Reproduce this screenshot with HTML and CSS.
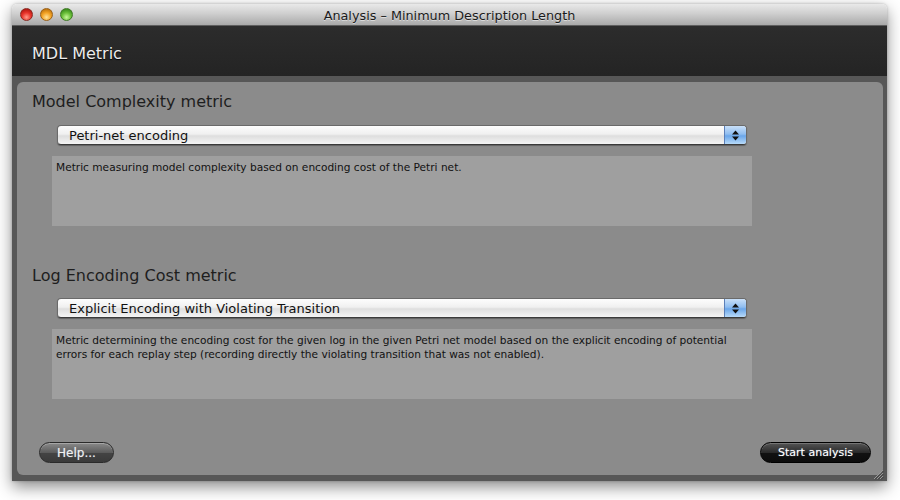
FILE: index.html
```html
<!DOCTYPE html>
<html>
<head>
<meta charset="utf-8">
<link rel="stylesheet" href="styles.css">
</head>
<body>
<div class="window">
  <div class="titlebar">
    <div class="lights">
      <span class="light red"></span>
      <span class="light amber"></span>
      <span class="light green"></span>
    </div>
    <div class="title">Analysis – Minimum Description Length</div>
  </div>
  <div class="header">MDL Metric</div>
  <div class="frame">
    <div class="panel">
      <h2 class="heading">Model Complexity metric</h2>
      <div class="select">
        <span class="select-label">Petri-net encoding</span>
        <span class="select-arrows">
          <svg width="9" height="13" viewBox="0 0 9 13"><path d="M4.5 1.5 L8 5.5 L1 5.5 Z M4.5 11.5 L8 7.5 L1 7.5 Z" fill="#111"/></svg>
        </span>
      </div>
      <div class="desc">Metric measuring model complexity based on encoding cost of the Petri net.</div>

      <h2 class="heading second">Log Encoding Cost metric</h2>
      <div class="select">
        <span class="select-label">Explicit Encoding with Violating Transition</span>
        <span class="select-arrows">
          <svg width="9" height="13" viewBox="0 0 9 13"><path d="M4.5 1.5 L8 5.5 L1 5.5 Z M4.5 11.5 L8 7.5 L1 7.5 Z" fill="#111"/></svg>
        </span>
      </div>
      <div class="desc">Metric determining the encoding cost for the given log in the given Petri net model based on the explicit encoding of potential errors for each replay step (recording directly the violating transition that was not enabled).</div>

      <div class="footer">
        <button class="btn help">Help...</button>
        <button class="btn start">Start analysis</button>
      </div>
    </div>
    <svg class="grip" width="12" height="12" viewBox="0 0 12 12">
      <path d="M11 2 L2 11 M11 5 L5 11 M11 8 L8 11" stroke="#9a9a9a" stroke-width="1"/>
      <path d="M11.5 3 L3 11.5 M11.5 6 L6 11.5 M11.5 9 L9 11.5" stroke="#3a3a3a" stroke-width="0.8"/>
    </svg>
  </div>
</div>
</body>
</html>
```
FILE: styles.css
```css
html, body {
  margin: 0;
  padding: 0;
  background: #ffffff;
}
body {
  width: 900px;
  height: 500px;
  overflow: hidden;
  font-family: "DejaVu Sans", "Noto Sans", sans-serif;
}
.window {
  width: 875px;
  margin: 4px 0 0 12px;
  border-radius: 5px 5px 0 0;
  box-shadow: 0 6px 16px rgba(0,0,0,0.45), 0 0 3px rgba(0,0,0,0.25);
  position: relative;
}
.titlebar {
  height: 22px;
  border-radius: 5px 5px 0 0;
  background: linear-gradient(#e9e9e9, #cfcfcf 45%, #a9a9a9);
  border-bottom: 1px solid #5e5e5e;
  box-sizing: border-box;
  display: flex;
  align-items: center;
  position: relative;
}
.lights {
  display: flex;
  gap: 7px;
  padding-left: 8px;
  position: absolute;
  left: 0;
  top: 4px;
}
.light {
  width: 13px;
  height: 13px;
  border-radius: 50%;
  box-sizing: border-box;
  display: block;
}
.red {
  background: radial-gradient(circle at 50% 75%, #ff9a8a 0, #e9352c 45%, #a8120c 90%);
  border: 1px solid #8a2a22;
}
.amber {
  background: radial-gradient(circle at 50% 75%, #ffe39a 0, #f4a425 45%, #b56a08 90%);
  border: 1px solid #9a6118;
}
.green {
  background: radial-gradient(circle at 50% 75%, #c8f79a 0, #6bc03a 45%, #2f7f16 90%);
  border: 1px solid #3f7a25;
}
.title {
  flex: 1;
  text-align: center;
  font-size: 12.8px;
  color: #1a1a1a;
  text-shadow: 0 1px 0 rgba(255,255,255,0.5);
  padding-top: 1px;
}
.header {
  height: 50px;
  background: linear-gradient(#2c2c2c, #242424);
  color: #ececec;
  font-size: 16px;
  line-height: 50px;
  padding: 3px 0 0 20px;
  box-sizing: border-box;
  text-shadow: 0 1px 1px #000;
}
.frame {
  background: #575757;
  padding: 6px 4px 6px 5px;
  position: relative;
}
.panel {
  background: #8b8b8b;
  border-radius: 6px;
  height: 393px;
  box-sizing: border-box;
  padding: 10px 0 0 15px;
  display: flex;
  flex-direction: column;
  align-items: flex-start;
}
.heading {
  margin: 0;
  font-weight: normal;
  font-size: 16px;
  line-height: 20px;
  color: #1e1e1e;
}
.heading.second {
  margin-top: 40px;
}
.select {
  margin: 13px 0 0 25px;
  width: 690px;
  height: 20px;
  box-sizing: border-box;
  border-radius: 4px;
  border: 1px solid #6a6a6a;
  border-bottom-color: #3a3a3a;
  background: linear-gradient(#fdfdfd, #f0f0f0 45%, #dedede 55%, #f4f4f4);
  display: flex;
  align-items: center;
  overflow: hidden;
  box-shadow: 0 1px 1px rgba(0,0,0,0.3);
}
.heading.second + .select {
  margin-top: 12px;
}
.select-label {
  flex: 1;
  padding-left: 11px;
  font-size: 13px;
  color: #111;
}
.select-arrows {
  width: 21px;
  height: 100%;
  background: linear-gradient(#c9e0f9, #8fbdf0 45%, #6aa6ea 55%, #b7daf9);
  border-left: 1px solid #5b7fb8;
  display: flex;
  align-items: center;
  justify-content: center;
}
.desc {
  margin: 11px 0 0 20px;
  width: 700px;
  height: 70px;
  box-sizing: border-box;
  background: #9f9f9f;
  padding: 4px 4px 0 4px;
  font-size: 10.6px;
  line-height: 14px;
  color: #121212;
}
.footer {
  margin: 43px 0 0 7px;
  width: 832px;
  display: flex;
  justify-content: space-between;
}
.btn {
  height: 21px;
  border-radius: 11px;
  font-family: "DejaVu Sans", sans-serif;
  font-size: 11px;
  padding: 0;
  border: 1px solid #2a2a2a;
  cursor: default;
  text-shadow: 0 0 1px rgba(200,225,255,0.6);
}
.help {
  width: 75px;
  font-size: 12px;
  color: #f0f0f0;
  background: linear-gradient(#8a8a8a, #5c5c5c 50%, #444 52%, #3a3a3a);
  box-shadow: inset 0 1px 0 rgba(255,255,255,0.25);
}
.start {
  width: 111px;
  color: #ffffff;
  background: linear-gradient(#555, #2a2a2a 50%, #111 52%, #0c0c0c);
  border-color: #000;
  box-shadow: inset 0 1px 0 rgba(255,255,255,0.2);
}
.grip {
  position: absolute;
  right: 3px;
  bottom: 1px;
}
```
